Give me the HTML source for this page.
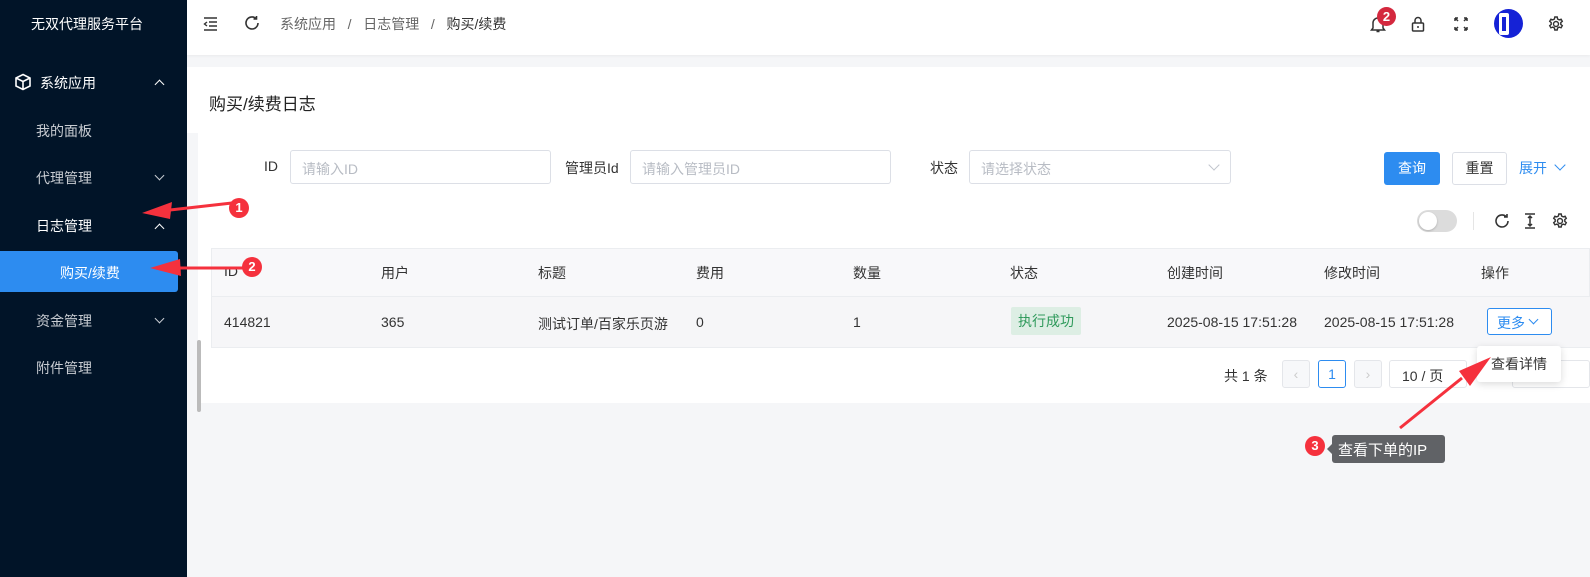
<!DOCTYPE html>
<html><head><meta charset="utf-8">
<style>
*{margin:0;padding:0;box-sizing:border-box}
body{width:1590px;height:577px;overflow:hidden;background:#f5f6f8;font-family:"Liberation Sans","Noto Sans CJK SC",sans-serif;font-size:14px;color:#333;position:relative}
.a{position:absolute}
.side{left:0;top:0;width:187px;height:577px;background:#011428}
.side .t{color:#fff;font-size:14px}
.side .m{color:#c8ccd2;font-size:14px}
.chev{position:absolute;width:7px;height:7px;border-left:1.5px solid #c8ccd2;border-top:1.5px solid #c8ccd2}
.up{transform:rotate(45deg)}
.down{transform:rotate(225deg)}
.input{border:1px solid #dcdfe6;border-radius:3px;background:#fff;height:34px;color:#b8bcc4;padding:8px 11px;font-size:14px}
.th{color:#333;font-size:14px}
.badge{background:#f5313d;color:#fff;border-radius:50%;width:20px;height:20px;text-align:center;font-size:13px;line-height:20px;font-weight:bold}
</style></head><body>
<div class="a side">
  <div class="a t" style="left:31px;top:14px">无双代理服务平台</div>
  <svg class="a" style="left:14px;top:73px" width="18" height="18" viewBox="0 0 18 18" fill="none" stroke="#fff" stroke-width="1.6"><path d="M9 1.5L16 5v8l-7 3.5L2 13V5z M2 5l7 3.5L16 5 M9 8.5v8"/></svg>
  <div class="a t" style="left:40px;top:73px">系统应用</div>
  <div class="chev up" style="left:156px;top:81px;border-color:#fff"></div>
  <div class="a m" style="left:36px;top:121px">我的面板</div>
  <div class="a m" style="left:36px;top:168px">代理管理</div>
  <div class="chev down" style="left:156px;top:172px"></div>
  <div class="a t" style="left:36px;top:216px">日志管理</div>
  <div class="chev up" style="left:156px;top:225px;border-color:#fff"></div>
  <div class="a" style="left:0;top:251px;width:178px;height:41px;background:#2d8cf0;border-radius:0 3px 3px 0"></div>
  <div class="a t" style="left:60px;top:263px">购买/续费</div>
  <div class="a m" style="left:36px;top:311px">资金管理</div>
  <div class="chev down" style="left:156px;top:315px"></div>
  <div class="a m" style="left:36px;top:358px">附件管理</div>
</div>
<!-- header -->
<div class="a" style="left:187px;top:0;width:1403px;height:55px;background:#fff;box-shadow:0 1px 3px rgba(0,0,0,.05)"></div>
<svg class="a" style="left:203px;top:17px" width="15" height="14" viewBox="0 0 15 14" stroke="#333" stroke-width="1.4" fill="none"><path d="M1 1h13M6 5h8M6 9h8M1 13h13M4 5L1.5 7 4 9"/></svg>
<svg class="a" style="left:244px;top:15px" width="16" height="16" viewBox="0 0 16 16" fill="none" stroke="#333" stroke-width="1.6"><path d="M14 8a6 6 0 1 1-2-4.5M12.5 1v3h-3"/></svg>
<div class="a" style="left:280px;top:14px;color:#666">系统应用 &nbsp;&nbsp;/&nbsp;&nbsp; 日志管理 &nbsp;&nbsp;/&nbsp;&nbsp; <span style="color:#333">购买/续费</span></div>
<svg class="a" style="left:1370px;top:15px" width="16" height="18" viewBox="0 0 16 18" fill="none" stroke="#333" stroke-width="1.5"><path d="M3 13V8a5 5 0 0 1 10 0v5l1.5 2h-13z M6.5 16.5h3"/></svg>
<div class="a badge" style="left:1377px;top:7px;background:#d4283e;width:19px;height:19px;line-height:19px">2</div>
<svg class="a" style="left:1411px;top:16px" width="14" height="16" viewBox="0 0 14 16" fill="none" stroke="#333" stroke-width="1.5"><rect x="1.5" y="7" width="11" height="8" rx="1"/><path d="M4 7V4.5a3 3 0 0 1 6 0V7"/><path d="M7 10v2"/></svg>
<svg class="a" style="left:1454px;top:17px" width="14" height="14" viewBox="0 0 14 14" fill="none" stroke="#333" stroke-width="1.5"><path d="M1 1l3 3M1 1h3M1 1v3 M13 1l-3 3M13 1h-3M13 1v3 M1 13l3-3M1 13h3M1 13v-3 M13 13l-3-3M13 13h-3M13 13v-3"/></svg>
<div class="a" style="left:1494px;top:9px;width:29px;height:29px;border-radius:50%;background:#1522d6;overflow:hidden"><div class="a" style="left:5px;top:4px;width:10px;height:22px;background:#fff;border-radius:2px"></div><div class="a" style="left:8px;top:8px;width:4px;height:14px;background:#1522d6"></div></div>
<svg class="a" style="left:1548px;top:16px" width="16" height="16" viewBox="0 0 16 16" fill="none" stroke="#333" stroke-width="1.4"><circle cx="8" cy="8" r="2.5"/><path d="M6.8 1h2.4l.4 2 1.6.9 1.9-.7 1.2 2.1-1.5 1.3v1.8l1.5 1.3-1.2 2.1-1.9-.7-1.6.9-.4 2H6.8l-.4-2-1.6-.9-1.9.7-1.2-2.1 1.5-1.3V6.6L1.7 5.3l1.2-2.1 1.9.7 1.6-.9z"/></svg>
<!-- title card -->
<div class="a" style="left:187px;top:67px;width:1403px;height:66px;background:#fff"></div>
<div class="a" style="left:209px;top:90px;font-size:17px;color:#222">购买/续费日志</div>
<!-- main card -->
<div class="a" style="left:198px;top:133px;width:1392px;height:270px;background:#fff"></div>
<div class="a" style="left:197px;top:340px;width:4px;height:72px;background:#bbb;border-radius:2px"></div>
<div class="a" style="left:264px;top:158px">ID</div>
<div class="a input" style="left:290px;top:150px;width:261px">请输入ID</div>
<div class="a" style="left:565px;top:158px">管理员Id</div>
<div class="a input" style="left:630px;top:150px;width:261px">请输入管理员ID</div>
<div class="a" style="left:930px;top:158px">状态</div>
<div class="a input" style="left:969px;top:150px;width:262px">请选择状态</div>
<div class="chev down" style="left:1210px;top:161px;border-color:#c0c4cc;width:8px;height:8px;border-width:1px"></div>
<div class="a" style="left:1384px;top:152px;width:56px;height:33px;background:#2d8cf0;border-radius:3px;color:#fff;text-align:center;line-height:33px">查询</div>
<div class="a" style="left:1452px;top:152px;width:55px;height:33px;border:1px solid #dcdfe6;border-radius:3px;text-align:center;line-height:31px;background:#fff">重置</div>
<div class="a" style="left:1519px;top:158px;color:#2d8cf0">展开</div>
<div class="chev down" style="left:1556px;top:161px;border-color:#2d8cf0;width:8px;height:8px;border-width:1px"></div>
<div class="a" style="left:1417px;top:210px;width:40px;height:22px;border-radius:11px;background:#dcdcdc"></div>
<div class="a" style="left:1419px;top:212px;width:18px;height:18px;border-radius:50%;background:#fff;box-shadow:0 1px 2px rgba(0,0,0,.2)"></div>
<div class="a" style="left:1473px;top:212px;width:1px;height:18px;background:#e5e5e5"></div>
<svg class="a" style="left:1494px;top:213px" width="16" height="16" viewBox="0 0 16 16" fill="none" stroke="#333" stroke-width="1.6"><path d="M14 8a6 6 0 1 1-2-4.5M13 1v3h-3"/></svg>
<svg class="a" style="left:1524px;top:213px" width="12" height="16" viewBox="0 0 12 16" fill="none" stroke="#333" stroke-width="1.5"><path d="M1 1h10M1 15h10M6 3v10M4 5l2-2 2 2M4 11l2 2 2-2"/></svg>
<svg class="a" style="left:1552px;top:213px" width="16" height="16" viewBox="0 0 16 16" fill="none" stroke="#333" stroke-width="1.4"><circle cx="8" cy="8" r="2.5"/><path d="M6.8 1h2.4l.4 2 1.6.9 1.9-.7 1.2 2.1-1.5 1.3v1.8l1.5 1.3-1.2 2.1-1.9-.7-1.6.9-.4 2H6.8l-.4-2-1.6-.9-1.9.7-1.2-2.1 1.5-1.3V6.6L1.7 5.3l1.2-2.1 1.9.7 1.6-.9z"/></svg>
<!-- table -->
<div class="a" style="left:211px;top:248px;width:1379px;height:100px;border:1px solid #ebedf0;background:#f8f8fa"></div>
<div class="a" style="left:212px;top:296px;width:1378px;height:51px;background:#f6f6f8;border-top:1px solid #ebedf0"></div>
<div class="a th" style="left:224px;top:263px">ID</div>
<div class="a th" style="left:381px;top:263px">用户</div>
<div class="a th" style="left:538px;top:263px">标题</div>
<div class="a th" style="left:696px;top:263px">费用</div>
<div class="a th" style="left:853px;top:263px">数量</div>
<div class="a th" style="left:1010px;top:263px">状态</div>
<div class="a th" style="left:1167px;top:263px">创建时间</div>
<div class="a th" style="left:1324px;top:263px">修改时间</div>
<div class="a th" style="left:1481px;top:263px">操作</div>
<div class="a" style="left:224px;top:314px">414821</div>
<div class="a" style="left:381px;top:314px">365</div>
<div class="a" style="left:538px;top:314px">测试订单/百家乐页游</div>
<div class="a" style="left:696px;top:314px">0</div>
<div class="a" style="left:853px;top:314px">1</div>
<div class="a" style="left:1011px;top:307px;width:70px;height:28px;background:#ddeee4;color:#2f9a5b;text-align:center;line-height:28px;border-radius:2px">执行成功</div>
<div class="a" style="left:1167px;top:314px">2025-08-15 17:51:28</div>
<div class="a" style="left:1324px;top:314px">2025-08-15 17:51:28</div>
<div class="a" style="left:1487px;top:308px;width:65px;height:27px;border:1px solid #2d8cf0;border-radius:3px;background:#fff;color:#2d8cf0;padding:4px 0 0 9px">更多</div>
<div class="chev down" style="left:1530px;top:316px;border-color:#2d8cf0;width:7px;height:7px;border-width:1px"></div>
<!-- pagination -->
<div class="a" style="left:1224px;top:366px">共 1 条</div>
<div class="a" style="left:1282px;top:360px;width:28px;height:28px;border:1px solid #e4e6ea;border-radius:3px;background:#f7f8fa;color:#ccc;text-align:center;line-height:26px">‹</div>
<div class="a" style="left:1318px;top:360px;width:28px;height:28px;border:1px solid #2d8cf0;border-radius:3px;color:#2d8cf0;text-align:center;line-height:26px">1</div>
<div class="a" style="left:1354px;top:360px;width:28px;height:28px;border:1px solid #e4e6ea;border-radius:3px;background:#f7f8fa;color:#ccc;text-align:center;line-height:26px">›</div>
<div class="a" style="left:1389px;top:360px;width:78px;height:28px;border:1px solid #e4e6ea;border-radius:3px;padding:5px 0 0 12px">10 / 页</div>
<div class="a" style="left:1512px;top:360px;width:78px;height:28px;border:1px solid #e4e6ea;border-radius:3px"></div>
<!-- dropdown -->
<div class="a" style="left:1477px;top:346px;width:84px;height:36px;background:#fff;border-radius:3px;box-shadow:0 2px 8px rgba(0,0,0,.15);padding:8px 0 0 14px">查看详情</div>
<!-- annotations -->
<svg class="a" style="left:0;top:0" width="1590" height="577">
<g fill="#f5313d" stroke="#f5313d">
<path d="M232 203L170 210" stroke-width="3"/><path d="M142 213L172 202L170 219z" stroke="none"/>
<path d="M243 268L180 268" stroke-width="3"/><path d="M150 268L180 259L181 276z" stroke="none"/>
<path d="M1400 428L1462 378" stroke-width="3"/><path d="M1491 357L1470 386L1459 371z" stroke="none"/>
</g>
</svg>
<div class="a badge" style="left:229px;top:198px">1</div>
<div class="a badge" style="left:242px;top:257px">2</div>
<div class="a badge" style="left:1305px;top:436px">3</div>
<div class="a" style="left:1332px;top:435px;width:113px;height:28px;background:#606266;border-radius:3px;color:#fff;font-size:15px;padding:4px 0 0 6px">查看下单的IP</div>
<div class="a" style="left:1327px;top:444px;width:0;height:0;border-top:5px solid transparent;border-bottom:5px solid transparent;border-right:5px solid #606266"></div>
</body></html>
